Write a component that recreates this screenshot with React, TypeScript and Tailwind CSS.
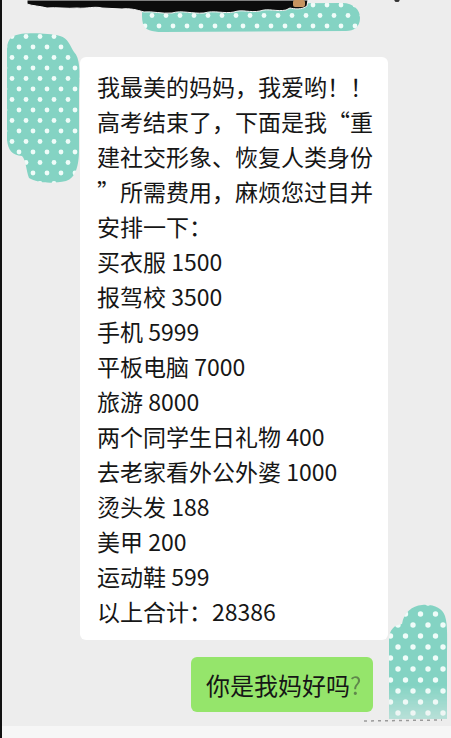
const lines = [
  "我最美的妈妈，我爱哟！！",
  "高考结束了，下面是我“重",
  "建社交形象、恢复人类身份",
  "”所需费用，麻烦您过目并",
  "安排一下：",
  "买衣服 1500",
  "报驾校 3500",
  "手机 5999",
  "平板电脑 7000",
  "旅游 8000",
  "两个同学生日礼物 400",
  "去老家看外公外婆 1000",
  "烫头发 188",
  "美甲 200",
  "运动鞋 599",
  "以上合计：28386",
];

function Decor() {
  return (
    <svg
      className="pointer-events-none absolute left-0 top-0"
      width="451"
      height="738"
      viewBox="0 0 451 738"
    >
      <defs>
        <pattern id="dots" width="14" height="21" patternUnits="userSpaceOnUse">
          <rect width="14" height="21" fill="#84d3c3" />
          <circle cx="3" cy="5" r="2.4" fill="#effcf9" />
          <circle cx="10" cy="15.5" r="2.4" fill="#effcf9" />
        </pattern>
        <pattern id="dots2" x="2" y="4" width="15" height="22" patternUnits="userSpaceOnUse">
          <rect width="15" height="22" fill="#84d3c3" />
          <circle cx="4" cy="5" r="2.7" fill="#effcf9" />
          <circle cx="11.5" cy="16" r="2.7" fill="#effcf9" />
        </pattern>
        <linearGradient id="fade" x1="0" y1="0" x2="0" y2="1">
          <stop offset="0.7" stopColor="#fff" stopOpacity="1" />
          <stop offset="1" stopColor="#fff" stopOpacity="0.45" />
        </linearGradient>
        <mask id="fadeMask">
          <rect x="380" y="600" width="70" height="122" fill="url(#fade)" />
        </mask>
      </defs>

      {/* top strip blob */}
      <path
        d="M143 4 L340 3 C352 3 358 10 358 18 C358 27 352 31 344 31 L160 32 C150 32 143 30 141 24 C139 16 140 8 143 4 Z"
        fill="url(#dots)"
      />
      {/* cropped title above */}
      <path
        d="M25 0 L306 0 L305 6 C300 10 292 9 288 8 L284 10 C275 12 266 8 258 11 C248 13 240 9 232 12 C222 14 212 10 202 13 C190 14 180 10 170 13 C160 14 150 11 142 12 C135 10 128 8 120 9 L100 8 C92 6 85 9 75 8 C65 9 55 7 45 8 C38 6 30 6 25 4 Z"
        fill="#0c0c0c"
        stroke="#f4f4f4"
        strokeWidth="1"
      />
      <rect x="291" y="0" width="12" height="7" rx="2" fill="#c79460" />
      <ellipse cx="395" cy="0.5" rx="2.5" ry="1.5" fill="#333" />

      {/* left blob */}
      <path
        d="M12 36 C20 32 45 33 58 36 C66 38 68 46 72 52 C78 58 78 70 77 90 L77 150 C77 165 74 178 64 181 C50 184 35 183 27 178 C24 170 24 160 20 156 C10 155 6 150 5 140 L5 50 C5 42 8 37 12 36 Z"
        fill="url(#dots)"
      />

      {/* right blob */}
      <path
        d="M400 624 C402 612 410 606 420 605 C432 604 440 608 443 616 C446 625 445 640 445 660 L445 719 L387 719 L387 640 C387 630 392 625 400 624 Z"
        fill="url(#dots2)"
        mask="url(#fadeMask)"
      />
      <path d="M362 721 L440 720" stroke="#9a9a9a" strokeWidth="1.5" strokeDasharray="3 4" />
    </svg>
  );
}

export default function App() {
  return (
    <div className="relative flex h-[738px] w-[451px] flex-col overflow-hidden border-l-2 border-[#111] bg-[#ededed] font-['Noto_Sans_CJK_SC','Noto_Sans',sans-serif] text-[#161616]">
      <Decor />

      <div className="relative ml-[78px] mt-[57px] w-[308px] rounded-[6px] bg-white pb-[11px] pl-[17px] pt-[12px] text-[23px] leading-[35px]">
        {lines.map((line) => (
          <div key={line} className="whitespace-nowrap">
            {line}
          </div>
        ))}
      </div>

      <div className="relative mt-[17px] flex justify-end pr-[78px]">
        <div className="flex h-[55px] w-[182px] items-center rounded-[6px] bg-[#95e56b] pl-[15px] text-[24px]">
          你是我妈好吗<span className="text-[#3d4a38] opacity-60">?</span>
        </div>
      </div>

      <div className="mt-auto h-[12px] bg-[#f6f6f6]" />
    </div>
  );
}
